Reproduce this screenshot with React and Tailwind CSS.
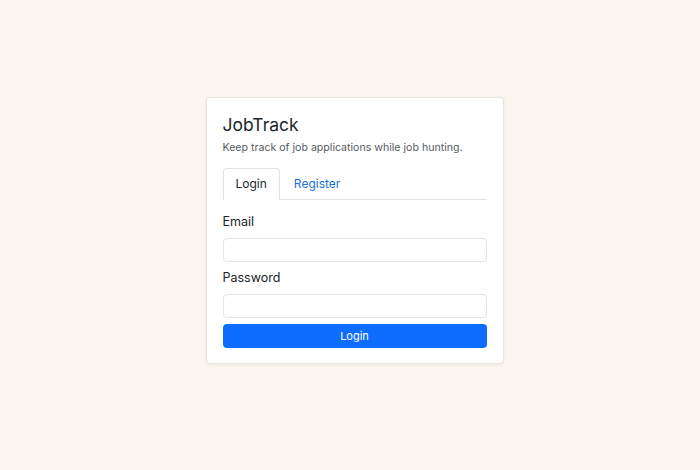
import { useState } from 'react';

const App = () => {
  const [tab, setTab] = useState('login');

  return (
    <div
      className="min-h-screen w-full bg-[#faf5ee] flex justify-center items-start pt-[97px] pl-[9px]"
      style={{ fontFamily: 'Inter, "Liberation Sans", sans-serif' }}
    >
      <div className="w-[298px] bg-white border border-[#e8e4df] rounded-[4px] shadow-[0_1px_3px_rgba(0,0,0,0.06)] px-4 pt-[16px] pb-[15px]">
        {/* Header */}
        <h1 className="text-[17.5px] leading-[22px] text-[#212529] font-normal">JobTrack</h1>
        <p className="mt-[4px] text-[10.6px] leading-[16px] text-[#555b61]">
          Keep track of job applications while job hunting.
        </p>

        {/* Tabs */}
        <div className="mt-[12px] flex border-b border-[#dee2e6]">
          <button
            onClick={() => setTab('login')}
            className={`h-[32px] px-[12px] text-[12px] -mb-px rounded-t-[4px] border ${
              tab === 'login'
                ? 'border-[#dee2e6] border-b-white bg-white text-[#212529]'
                : 'border-transparent text-[#1a6fd8]'
            }`}
          >
            Login
          </button>
          <button
            onClick={() => setTab('register')}
            className={`h-[32px] px-[13px] text-[12px] -mb-px rounded-t-[4px] border ${
              tab === 'register'
                ? 'border-[#dee2e6] border-b-white bg-white text-[#212529]'
                : 'border-transparent text-[#1a6fd8]'
            }`}
          >
            Register
          </button>
        </div>

        {/* Form */}
        <form className="mt-[13px] flex flex-col" onSubmit={(e) => e.preventDefault()}>
          <label className="text-[12.5px] leading-[18px] text-[#212529]">Email</label>
          <input
            type="email"
            className="mt-[7px] h-[24px] w-full rounded-[4px] border border-[#e2e5e8] outline-none px-2 text-[12px]"
          />
          <label className="mt-[7px] text-[12.5px] leading-[18px] text-[#212529]">Password</label>
          <input
            type="password"
            className="mt-[7px] h-[24px] w-full rounded-[4px] border border-[#e2e5e8] outline-none px-2 text-[12px]"
          />
          <button
            type="submit"
            className="mt-[6px] h-[24px] w-full rounded-[4px] bg-[#0d6efd] text-white text-[11px]"
          >
            Login
          </button>
        </form>
      </div>
    </div>
  );
};

export default App;
